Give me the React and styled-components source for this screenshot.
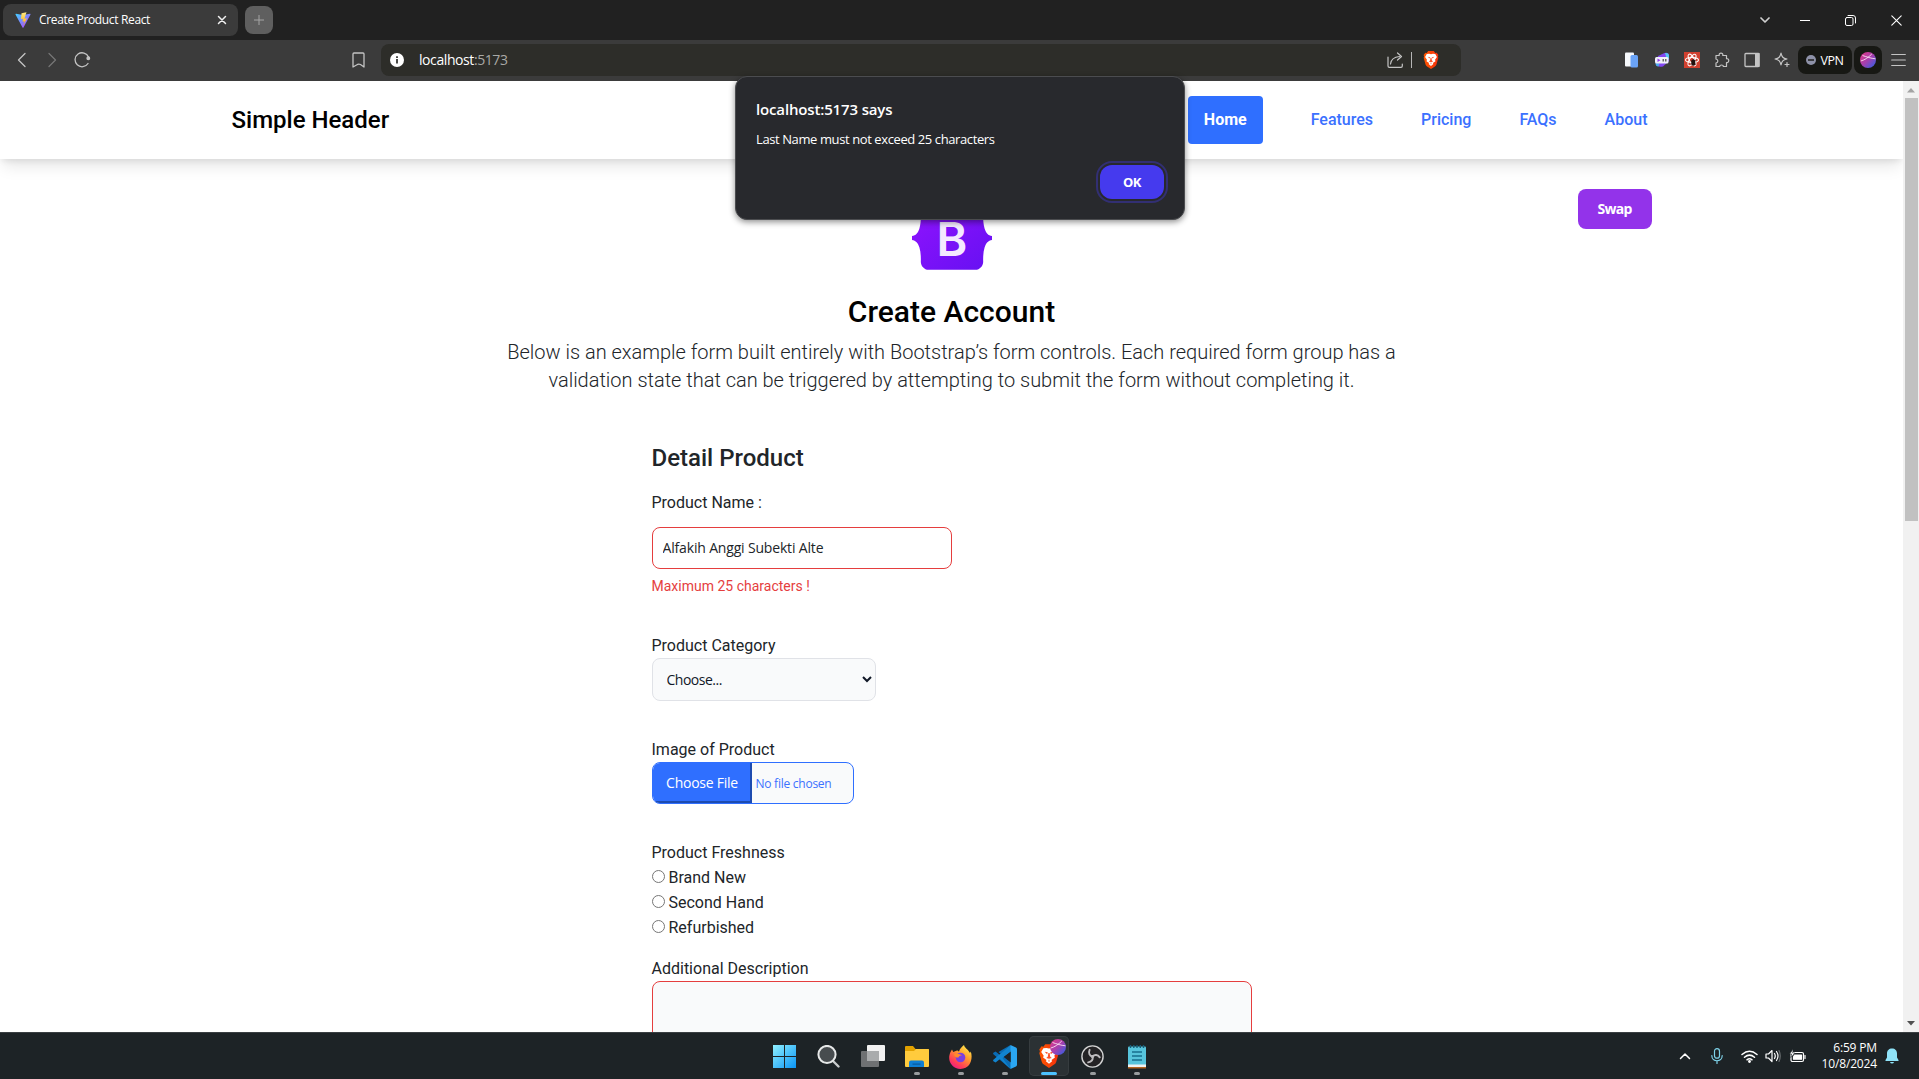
import React from "react";
import styled, { createGlobalStyle } from "styled-components";

const SEGOE = `"Open Sans", "Noto Sans", sans-serif`;
const ROBOTO = `Roboto, "Liberation Sans", sans-serif`;

const GlobalStyle = createGlobalStyle`
  *, *::before, *::after { box-sizing: border-box; }
  body { margin: 0; overflow: hidden; background: #fff; }
  h1, h2, p { margin: 0; }
  svg { display: block; flex: none; }
`;

const Screen = styled.div`
  position: relative;
  display: flex;
  flex-direction: column;
  width: 1919px;
  height: 1079px;
  overflow: hidden;
  font-family: ${SEGOE};
`;

/* ---------- browser chrome ---------- */

const TabStrip = styled.div`
  display: flex;
  align-items: center;
  height: 40px;
  flex: none;
  padding: 0 17px 0 3px;
  background: #212121;
`;

const Tab = styled.div`
  display: flex;
  align-items: center;
  width: 235px;
  height: 32px;
  padding: 0 11px 0 12px;
  border-radius: 8px;
  background: #3b3b3b;
`;

const Txt = styled.span`
  font-family: ${SEGOE};
  font-size: ${(p) => p.$size}px;
  font-weight: ${(p) => p.$weight || 400};
  letter-spacing: ${(p) => p.$ls || 0}px;
  color: ${(p) => p.$color || "#fff"};
  line-height: 1.36;
  white-space: nowrap;
`;

const TabTitle = styled(Txt)`
  flex: 1;
  margin-left: 8px;
`;

const NewTab = styled.div`
  display: flex;
  align-items: center;
  justify-content: center;
  width: 28px;
  height: 28px;
  margin-left: 7px;
  border-radius: 8px;
  background: #5f5f5f;
`;

const WindowControls = styled.div`
  display: flex;
  align-items: center;
  margin-left: auto;
  gap: ${(p) => p.$gap}px;
`;

const MenuChevron = styled.div`
  margin-right: -5px;
`;

const Toolbar = styled.div`
  display: flex;
  align-items: center;
  height: 41px;
  flex: none;
  padding: 0 13px 1px 17px;
  background: #3b3b3b;
`;

const NavIcons = styled.div`
  display: flex;
  align-items: center;
  width: 335px;
  gap: 20px;

  & > :last-child { margin-left: -3px; }
`;

const AddressBar = styled.div`
  display: flex;
  align-items: center;
  width: 1080px;
  height: 32px;
  margin-left: 16px;
  padding: 0 22px 0 9px;
  border-radius: 8px;
  background: #2d2d29;
`;

const Url = styled.div`
  flex: 1;
  margin-left: 15px;
  display: flex;
`;

const Divider = styled.div`
  width: 1px;
  height: 16px;
  margin: 0 11px 0 7px;
  background: #b5b5b5;
`;

const Extensions = styled.div`
  display: flex;
  align-items: center;
  margin-left: auto;
  gap: 14px;
`;

const Pills = styled.div`
  display: flex;
  gap: 2px;
  margin: 0 9px 0 8px;
`;

const Pill = styled.div`
  display: flex;
  align-items: center;
  justify-content: center;
  gap: 4px;
  width: ${(p) => p.$width}px;
  height: 28px;
  border-radius: 8px;
  background: #171814;
`;

/* ---------- web page ---------- */

const Viewport = styled.div`
  display: flex;
  height: 951px;
  flex: none;
  overflow: hidden;
  background: #fff;
`;

const Page = styled.div`
  width: 1903px;
  font-family: ${ROBOTO};
  color: #212529;
`;

const Header = styled.header`
  display: flex;
  align-items: center;
  justify-content: space-between;
  height: 78px;
  padding: 0 239.500px 0 231.500px;
  background: #fff;
  box-shadow: 0 10px 15px -3px rgba(0, 0, 0, 0.1), 0 4px 6px -2px rgba(0, 0, 0, 0.08);
`;

const Brand = styled.div`
  font-size: 24px;
  font-weight: 500;
  color: #000;
`;

const Nav = styled.nav`
  display: flex;
  gap: 16px;
`;

const NavLink = styled.a`
  padding: 12px 16px;
  border-radius: 4px;
  font-size: 16px;
  line-height: 24px;
  font-weight: ${(p) => (p.$active ? 700 : 500)};
  color: ${(p) => (p.$active ? "#fff" : "#3b71ff")};
  background: ${(p) => (p.$active ? "#2f6fff" : "transparent")};
  margin-right: ${(p) => (p.$active ? 16 : 0)}px;
`;

const Hero = styled.section`
  display: flex;
  flex-direction: column;
  align-items: center;
  position: relative;
  padding-top: 47px;
`;

const SwapButton = styled.button`
  position: absolute;
  right: 251px;
  top: 30px;
  width: 74px;
  height: 40px;
  padding: 0 1px 1px 0;
  border: 0;
  border-radius: 8px;
  background: #9333ea;
  color: #fff;
  font: 700 14px ${SEGOE};
  letter-spacing: -0.7px;
`;

const HeroTitle = styled.h1`
  margin-top: 24px;
  font-size: 30px;
  line-height: 36px;
  font-weight: 500;
  color: #000;
`;

const Lead = styled.p`
  width: 930px;
  margin-top: 8px;
  text-align: center;
  font-size: 20px;
  line-height: 28px;
  font-weight: 300;
  letter-spacing: -0.01px;
`;

const Form = styled.form`
  display: flex;
  flex-direction: column;
  align-items: flex-start;
  width: 600px;
  margin: 50px auto 0 651.500px;
`;

const FormTitle = styled.h2`
  font-size: 24px;
  line-height: 29px;
  font-weight: 500;
`;

const Label = styled.label`
  margin-top: ${(p) => p.$top || 0}px;
  font-size: 16px;
  line-height: 24px;
`;

const NameInput = styled.input`
  width: 300px;
  height: 42px;
  margin-top: 12px;
  padding: 0 10px 1px;
  border: 1px solid #e53e3e;
  border-radius: 8px;
  outline: 0;
  font: 400 14px ${SEGOE};
  letter-spacing: -0.17px;
  color: #212529;
  background: #fff;
`;

const ErrorText = styled.div`
  margin-top: 7px;
  font-size: 14px;
  line-height: 20px;
  color: #e53e3e;
`;

const CategorySelect = styled.select`
  width: 224px;
  height: 43px;
  padding: 0 11px 0 10px;
  border: 1px solid #e0e2e7;
  border-radius: 8px;
  background: #f9fafb;
  font: 400 14px ${SEGOE};
  letter-spacing: -0.5px;
  color: #111827;
`;

const FileField = styled.div`
  display: flex;
  width: 202px;
  height: 42px;
  border: 1px solid #2f6fff;
  border-radius: 8px;
  overflow: hidden;
  background: #f9fafb;
`;

const FileButton = styled.div`
  display: flex;
  align-items: center;
  justify-content: center;
  width: 99px;
  padding: 1px 0 0 2px;
  border-right: 2px solid #1d4bb0;
  border-bottom: 2px solid #1d4bb0;
  background: #2f6fff;
`;

const FileName = styled.div`
  display: flex;
  align-items: center;
  padding: 2px 0 0 4px;
`;

const RadioRow = styled.label`
  display: flex;
  align-items: center;
  gap: 4px;
  height: 25px;
  font-size: 16px;
`;

const Radio = styled.input`
  width: 13px;
  height: 13px;
  margin: 0 0 2px;
`;

const Description = styled.textarea`
  width: 600px;
  height: 120px;
  flex: none;
  border: 1px solid #e53e3e;
  border-radius: 8px;
  background: #f9fafb;
  resize: none;
`;

const ScrollTrack = styled.div`
  display: flex;
  flex-direction: column;
  align-items: center;
  width: 16px;
  padding: 7px 0 6px;
  background: #f1f1f1;
`;

const Thumb = styled.div`
  width: 13px;
  height: 423px;
  margin: 5px 0 auto;
  background: #c1c1c1;
`;

/* ---------- alert dialog ---------- */

const Dialog = styled.div`
  position: absolute;
  left: 735px;
  top: 76px;
  display: flex;
  flex-direction: column;
  width: 450px;
  height: 144px;
  padding: 22px 20px 20px;
  border: 1px solid #4b4c4f;
  border-radius: 12px;
  background: #28292d;
  box-shadow: 0 2px 6px rgba(0, 0, 0, 0.45);
`;

const DialogMessage = styled(Txt)`
  margin-top: 12px;
`;

const OkButton = styled.button`
  align-self: flex-end;
  width: 64px;
  height: 34px;
  margin-top: auto;
  padding: 0;
  border: 0;
  border-radius: 12px;
  outline: 2px solid #322f73;
  outline-offset: 2px;
  background: #453aee;
  color: #fff;
  font: 700 13px ${SEGOE};
  letter-spacing: -0.4px;
`;

/* ---------- taskbar ---------- */

const Taskbar = styled.div`
  display: flex;
  align-items: stretch;
  justify-content: space-between;
  height: 47px;
  flex: none;
  padding: 0 20px 0 764.500px;
  border-top: 1px solid #3a3f42;
  background: #1d2326;
`;

const Apps = styled.div`
  display: flex;
  gap: 0;
`;

const AppSlot = styled.div`
  display: flex;
  flex-direction: column;
  align-items: center;
  justify-content: space-between;
  position: relative;
  width: 40px;
  height: 40px;
  margin: 3px 4px 0 0;
  padding: ${(p) => (p.$active ? 8 : 9)}px 0 1px;
  border-radius: 5px;
  border: 0;
  background: ${(p) => (p.$active ? "#2b3134" : "transparent")};
  box-shadow: ${(p) => (p.$active ? "inset 0 0 0 1px #363c3f" : "none")};
`;

const Indicator = styled.div`
  width: ${(p) => (p.$active ? 16 : 6)}px;
  height: 3px;
  border-radius: 2px;
  background: ${(p) => (p.$active ? "#4cc2ff" : "#999c9e")};
`;

const ProfileBadge = styled.div`
  position: absolute;
  right: 3px;
  top: 3px;
`;

const Tray = styled.div`
  display: flex;
  align-items: center;
`;

const Gap = styled.div`
  margin-right: ${(p) => p.$w}px;
`;

const Clock = styled.div`
  display: flex;
  flex-direction: column;
  align-items: flex-end;
  margin-right: 8px;
`;

/* ---------- icons ---------- */

const Line = ({ w = 16, h = 16, sw = 1.4, color = "#c4c4c4", children }) => (
  <svg width={w} height={h} viewBox={`0 0 ${w} ${h}`} fill="none" stroke={color} strokeWidth={sw} strokeLinecap="round" strokeLinejoin="round">
    {children}
  </svg>
);

const ViteIcon = () => (
  <svg width="16" height="16" viewBox="0 0 32 32">
    <defs>
      <linearGradient id="va" x1="0" y1="0" x2="1" y2="1"><stop stopColor="#41d1ff" /><stop offset="1" stopColor="#bd34fe" /></linearGradient>
      <linearGradient id="vb" x1="0" y1="0" x2="0" y2="1"><stop stopColor="#ffea83" /><stop offset="1" stopColor="#ffa800" /></linearGradient>
    </defs>
    <path d="M31 5 17 31q-1 1-2 0L1 5q-.5-1.500 1-1.500l14 2.500 14-2.500q1.500 0 1 1.500z" fill="url(#va)" />
    <path d="M23 .5 13 2.500l-1 12 4-1-1 6 4-1-3 9 8-15-5 1 2-7z" fill="url(#vb)" />
  </svg>
);

const BraveIcon = ({ w = 16, h = 18 }) => (
  <svg width={w} height={h} viewBox="0 0 32 38">
    <defs><linearGradient id="br" x1="0" x2="1"><stop stopColor="#ff5601" /><stop offset="1" stopColor="#f2300d" /></linearGradient></defs>
    <path d="M10 0h12l3 4 3-.5 3.500 5-1 3 1 3-4 14q-1 3-4 4.500L16 38l-7.500-5q-3-1.500-4-4.500L.5 14.500l1-3-1-3L4 3.500 7 4z" fill="url(#br)" />
    <path d="M16 7l4-1 5 .5 3.500 6-4 6 1 3-5.500 4 1 2-5 4-5-4 1-2-5.500-4 1-3-4-6L7 6.500 12 6z" fill="#fff" />
    <path d="M9 12l5 1-1 3zM23 12l-5 1 1 3zM15 14h2l1 6 2.500 2-4.500 1.500L11.500 22l2.500-2zM15.300 25h1.400v3h-1.400z" fill="#fb542b" />
  </svg>
);

const AvatarIcon = ({ size = 16 }) => (
  <svg width={size} height={size} viewBox="0 0 16 16">
    <defs><linearGradient id="av" x1=".1" y1=".1" x2=".9" y2=".9"><stop stopColor="#d83a8c" /><stop offset=".5" stopColor="#a63fae" /><stop offset="1" stopColor="#3f5be0" /></linearGradient></defs>
    <circle cx="8" cy="8" r="8" fill="url(#av)" />
    <path d="M.8 9c4-1 7.500-3.500 11-7M2.500 3.500C6.500 4.800 11 6.500 15.500 6.800" fill="none" stroke="#fbe0f2" strokeWidth=".9" />
  </svg>
);

const BootstrapLogo = () => (
  <svg width="80" height="64" viewBox="0 0 118 94">
    <defs>
      <linearGradient id="bs" x1="0" y1="0" x2="1" y2="1"><stop stopColor="#9013fe" /><stop offset="1" stopColor="#6610f2" /></linearGradient>
    </defs>
    <path fill="url(#bs)" d="M24.509 0c-6.733 0-11.715 5.893-11.492 12.284.214 6.140-.064 14.092-2.066 20.577C8.943 39.365 5.547 43.485 0 44.014v5.972c5.547.529 8.943 4.649 10.951 11.153 2.002 6.485 2.280 14.437 2.066 20.577C12.794 88.106 17.776 94 24.510 94H93.500c6.733 0 11.714-5.893 11.491-12.284-.214-6.140.064-14.092 2.066-20.577 2.009-6.504 5.396-10.624 10.943-11.153v-5.972c-5.547-.529-8.934-4.649-10.943-11.153-2.002-6.484-2.280-14.437-2.066-20.577C105.214 5.894 100.233 0 93.500 0H24.508z" />
    <text x="59" y="73" textAnchor="middle" fontFamily="Inter, Liberation Sans, sans-serif" fontWeight="600" fontSize="69" fill="#f4e9ff">B</text>
  </svg>
);

const WindowsIcon = () => (
  <svg width="23" height="23" viewBox="0 0 23 23">
    <defs><linearGradient id="wi" x1="0" y1="0" x2="23" y2="23" gradientUnits="userSpaceOnUse"><stop stopColor="#8ff0ff" /><stop offset="1" stopColor="#0a94f5" /></linearGradient></defs>
    <path d="M0 0h11v11H0zM12 0h11v11H12zM0 12h11v11H0zM12 12h11v11H12z" fill="url(#wi)" />
  </svg>
);

const SearchIcon = () => (
  <svg width="23" height="23" viewBox="0 0 23 23" fill="none" strokeLinecap="round">
    <path d="M16.500 16.500l5 5" stroke="#c9cccd" strokeWidth="2.400" />
    <circle cx="10" cy="9.500" r="8.600" fill="#474c4f" stroke="#e6e8e8" strokeWidth="2" />
  </svg>
);

const TaskViewIcon = () => (
  <svg width="24" height="23" viewBox="0 0 24 23">
    <rect x="6" y="0" width="18" height="16" rx="1" fill="#f1f1f1" />
    <rect x="0" y="6" width="18" height="16" rx="1" fill="#6f7173" />
    <path d="M6 6h12v10H6z" fill="#a9abac" />
  </svg>
);

const FolderIcon = () => (
  <svg width="24" height="23" viewBox="0 0 24 23">
    <path d="M0 2q0-1 1-1h7l2.500 3H23q1 0 1 1v4H0z" fill="#e2a100" />
    <path d="M0 6h9l2-2h12q1 0 1 1v16q0 1-1 1H1q-1 0-1-1z" fill="#ffcb3d" />
    <path d="M4 22v-4.500Q4 15.500 6 15.500h11q2 0 2 2V22z" fill="#0f7fd4" />
    <path d="M7.500 18.500h8v1.200h-8z" fill="#0a5a9c" />
  </svg>
);

const FirefoxIcon = () => (
  <svg width="23" height="24" viewBox="0 0 23 24">
    <defs>
      <linearGradient id="ff" x1=".85" y1="0" x2=".2" y2="1"><stop stopColor="#fff44f" /><stop offset=".4" stopColor="#ff9a2e" /><stop offset=".75" stopColor="#ff4055" /><stop offset="1" stopColor="#e8178a" /></linearGradient>
    </defs>
    <path d="M15 0c.5 3 4 4 6 8l.8-1.500C24 13 22 24 11.500 24 4 24-1 17 .4 10.500 1 7.500 2 6 3 4.500L4.200 7 8 5.500c1-.5 1.500 1 2 1C11 3 13 2 15 0z" fill="url(#ff)" />
    <circle cx="11.500" cy="12.500" r="4.800" fill="#7a3fe0" />
    <path d="M5 9c3-1.500 6 0 8 1.500-2 0-3 .5-3.500 2C7.500 13 5.500 12 5 9z" fill="#ff8a2a" />
  </svg>
);

const VsCodeIcon = () => (
  <svg width="24" height="24" viewBox="0 0 24 24">
    <path d="M17.500 0 7 10 2.600 6.600.4 7.800q-.6.700 0 1.400L17.500 24l1.500-5-1.500-2L5.500 7z" fill="#0a6cb5" />
    <path d="M17.500 24 7 14l-4.400 3.400-2.200-1.200q-.6-.7 0-1.400L17.500 0l1 3-1 4L9.500 13z" fill="#1184cf" />
    <path d="M17.500 0 23 2.600q1 .5 1 1.600v15.600q0 1.100-1 1.600L17.500 24z" fill="#2aa6f2" />
    <path d="M17.600 6.800v10.400L10.800 12z" fill="#1d2326" />
  </svg>
);

const ObsIcon = () => (
  <svg width="23" height="23" viewBox="0 0 23 23" fill="none">
    <circle cx="11.500" cy="11.500" r="10.600" fill="#242325" stroke="#d2d2d2" strokeWidth="1.400" />
    <g stroke="#bdbbbd" strokeWidth="1.900" strokeLinecap="round">
      {[0, 120, 240].map((angle) => (
        <path key={angle} d="M11.500 11.500C8.500 10.800 7.200 8 8.600 4.800" transform={`rotate(${angle} 11.500 11.500)`} />
      ))}
    </g>
    <circle cx="11.500" cy="11.500" r="1.600" fill="#bdbbbd" />
  </svg>
);

const NotepadIcon = () => (
  <svg width="18" height="24" viewBox="0 0 18 24">
    <rect y="1.500" width="18" height="20" rx="1" fill="#57c4dc" />
    <path d="M2.500 0v3M5.800 0v3M9 0v3M12.300 0v3M15.500 0v3" stroke="#155d78" strokeWidth="1.400" />
    <path d="M4 7h10M4 11h10M4 15h10" stroke="#176d8d" strokeWidth="1.600" />
    <path d="M0 19.500h18V22H0z" fill="#eef2f3" />
    <path d="M0 22h18v1.500H0z" fill="#b5641f" />
  </svg>
);

const apps = [
  { id: "start", icon: <WindowsIcon /> },
  { id: "search", icon: <SearchIcon /> },
  { id: "tasks", icon: <TaskViewIcon /> },
  { id: "files", icon: <FolderIcon />, running: true },
  { id: "firefox", icon: <FirefoxIcon />, running: true },
  { id: "vscode", icon: <VsCodeIcon />, running: true },
  { id: "brave", icon: <BraveIcon w={20} h={24} />, running: true, active: true },
  { id: "obs", icon: <ObsIcon />, running: true },
  { id: "notepad", icon: <NotepadIcon />, running: true },
];

const BrowserChrome = () => (
  <>
    <TabStrip>
      <Tab>
        <ViteIcon />
        <TabTitle $size={12} $ls={-0.35}>Create Product React</TabTitle>
        <Line w={10} h={10} sw={1.500} color="#f0f0f0"><path d="M1.500 1.500l7 7M8.500 1.500l-7 7" /></Line>
      </Tab>
      <NewTab><Line w={10} h={10} sw={1} color="#a5a5a5"><path d="M5 0v10M0 5h10" /></Line></NewTab>
      <WindowControls $gap={35}>
        <MenuChevron><Line w={10} h={10} sw={1.700} color="#cfcfcf"><path d="M1 3l4 4 4-4" /></Line></MenuChevron>
        <Line w={10} h={10} sw={1} color="#fff"><path d="M0 5.500h10" /></Line>
        <Line w={11} h={11} sw={1} color="#fff"><rect x=".5" y="2.500" width="7.500" height="8" rx="1.500" /><path d="M3 .5h5q2.500 0 2.500 2.500v5" /></Line>
        <Line w={11} h={11} sw={1.100} color="#fff"><path d="M.8.8l9.400 9.400M10.200.8L.8 10.200" /></Line>
      </WindowControls>
    </TabStrip>
    <Toolbar>
      <NavIcons>
        <Line w={10} h={16} sw={1.300}><path d="M8 1.500L1.500 8 8 14.500" /></Line>
        <Line w={10} h={16} sw={1.300} color="#757575"><path d="M2 1.500L8.500 8 2 14.500" /></Line>
        <Line w={17} h={16} sw={1.300}><path d="M14.500 5A7 7 0 1 0 14 11.500" /><circle cx="14.300" cy="6.200" r="1.300" fill="#c4c4c4" /></Line>
      </NavIcons>
      <Line w={13} h={16} sw={1.300}><path d="M1 2q0-1 1-1h9q1 0 1 1v13l-3.500-2.500Q6.500 11.500 4.500 13L1 15z" /></Line>
      <AddressBar>
        <svg width="14" height="14" viewBox="0 0 14 14"><circle cx="7" cy="7" r="7" fill="#fff" /><path d="M6 6h2v4.500H6zM6 3.200h2V5H6z" fill="#4a4a48" /></svg>
        <Url>
          <Txt $size={14} $ls={-0.42}>localhost</Txt>
          <Txt $size={14} $ls={-0.42} $color="#a9a9a6">:5173</Txt>
        </Url>
        <Line w={17} h={16} sw={1.200}><path d="M1 5v9q0 1.300 1.300 1.300H14q1.300 0 1.300-1.300v-2M3.500 12c.5-4.500 3.500-7 9-7.500M10.500 1l4 3.500-4 3.500" /></Line>
        <Divider />
        <BraveIcon />
      </AddressBar>
      <Extensions>
        <svg width="15" height="16" viewBox="0 0 15 16"><rect x="0" y=".5" width="9" height="14" rx="1" fill="#f6f8fb" /><rect x="5.500" y="3" width="7.500" height="12.500" rx="1.500" fill="#6aa3f7" /></svg>
        <svg width="16" height="16" viewBox="0 0 16 16"><path d="M4 4l6.500-3q4-1 4.500 2v6l-6 5.500Q4 15.500 2 13z" fill="#8246f2" /><path d="M11 1q4-.5 4 3v3l-3-2.500z" fill="#56c8f0" /><path d="M1.500 11l4 .5-1 3q-3 0-3-3.500z" fill="#4ba8ee" /><rect x="1" y="5" width="13.500" height="6.500" rx="1.500" fill="#f0f1fa" /><path d="M3.500 6.500v3.500l3-1.700z" fill="#9a3cf0" /><path d="M8.500 7h1.500v2.500H8.500zM11 7h1.500v2.500H11z" fill="#666" /></svg>
        <svg width="16" height="16" viewBox="0 0 16 16"><path d="M0 0h16v16H0z" fill="#d0402f" /><g fill="none" stroke="#fff" strokeWidth="1.100"><ellipse cx="8" cy="8" rx="6.500" ry="2.500" /><ellipse cx="8" cy="8" rx="2.500" ry="6.500" transform="rotate(30 8 8)" /><ellipse cx="8" cy="8" rx="2.500" ry="6.500" transform="rotate(-30 8 8)" /></g><ellipse cx="9.300" cy="10.500" rx="2" ry="3.200" fill="#22100e" /><path d="M6.800 8.500l5 4M11.800 8.500l-5 4" stroke="#22100e" strokeWidth=".8" /></svg>
        <Line w={16} h={16} sw={1.200}><path d="M2 3.500h3.200C4.500.2 9.500.2 8.800 3.500h3.700v3.200c3-.6 3 4.400 0 3.800v4H9.300c.5-2-4-2-3.500 0H2V11c2.500-.5 2.500-3.500 0-4z" /></Line>
        <svg width="16" height="16" viewBox="0 0 16 16"><rect x="1" y="1.500" width="14" height="13" rx=".8" fill="none" stroke="#c4c4c4" strokeWidth="1.300" /><path d="M11 1h4.500v14H11z" fill="#c4c4c4" /></svg>
        <Line w={16} h={16} sw={1.200}><path d="M7 1c.8 4 2 5.300 6 6-4 .8-5.200 2-6 6-.8-4-2-5.200-6-6 4-.7 5.200-2 6-6zM13 10.500v4M11 12.500h4" /></Line>
      </Extensions>
      <Pills>
        <Pill $width={54}>
          <svg width="10" height="10" viewBox="0 0 10 10"><circle cx="5" cy="5" r="5" fill="#8e92a8" /><path d="M2 4.300h6v1.400H2z" fill="#171814" /></svg>
          <Txt $size={12.500} $ls={-0.4}>VPN</Txt>
        </Pill>
        <Pill $width={28}><AvatarIcon /></Pill>
      </Pills>
      <Line w={15} h={14} sw={1.200} color="#c4c4c4"><path d="M.7 1.500h13.600M.7 7h13.600M.7 12.500h13.600" /></Line>
    </Toolbar>
  </>
);

const ProductPage = () => (
  <Page>
    <Header>
      <Brand>Simple Header</Brand>
      <Nav>
        <NavLink $active>Home</NavLink>
        <NavLink>Features</NavLink>
        <NavLink>Pricing</NavLink>
        <NavLink>FAQs</NavLink>
        <NavLink>About</NavLink>
      </Nav>
    </Header>
    <Hero>
      <SwapButton>Swap</SwapButton>
      <BootstrapLogo />
      <HeroTitle>Create Account</HeroTitle>
      <Lead>
        Below is an example form built entirely with Bootstrap’s form controls. Each required form group has a
        validation state that can be triggered by attempting to submit the form without completing it.
      </Lead>
    </Hero>
    <Form>
      <FormTitle>Detail Product</FormTitle>
      <Label $top={18}>Product Name :</Label>
      <NameInput defaultValue="Alfakih Anggi Subekti Alte" spellCheck={false} />
      <ErrorText>Maximum 25 characters !</ErrorText>
      <Label $top={38}>Product Category</Label>
      <CategorySelect><option>Choose...</option></CategorySelect>
      <Label $top={37}>Image of Product</Label>
      <FileField>
        <FileButton><Txt $size={14} $ls={-0.25}>Choose File</Txt></FileButton>
        <FileName><Txt $size={12} $ls={-0.25} $color="#3b71ff">No file chosen</Txt></FileName>
      </FileField>
      <Label $top={37}>Product Freshness</Label>
      {["Brand New", "Second Hand", "Refurbished"].map((name) => (
        <RadioRow key={name}><Radio type="radio" name="freshness" />{name}</RadioRow>
      ))}
      <Label $top={17}>Additional Description</Label>
      <Description />
    </Form>
  </Page>
);

export default function App() {
  return (
    <Screen>
      <GlobalStyle />
      <BrowserChrome />
      <Viewport>
        <ProductPage />
        <ScrollTrack>
          <svg width="8" height="5" viewBox="0 0 8 5"><path d="M4 0l4 4.500H0z" fill="#a3a3a3" /></svg>
          <Thumb />
          <svg width="8" height="5" viewBox="0 0 8 5"><path d="M4 4.500L0 0h8z" fill="#505050" /></svg>
        </ScrollTrack>
      </Viewport>
      <Dialog>
        <Txt $size={15} $weight={600} $ls={-0.15}>localhost:5173 says</Txt>
        <DialogMessage $size={13} $ls={-0.4}>Last Name must not exceed 25 characters</DialogMessage>
        <OkButton>OK</OkButton>
      </Dialog>
      <Taskbar>
        <Apps>
          {apps.map((a) => (
            <AppSlot key={a.id} $active={a.active}>
              {a.icon}
              {a.active && <ProfileBadge><AvatarIcon /></ProfileBadge>}
              {a.running && <Indicator $active={a.active} />}
            </AppSlot>
          ))}
        </Apps>
        <Tray>
          <Line w={12} h={8} sw={1.500} color="#fff"><path d="M1.500 6.500L6 2l4.500 4.500" /></Line>
          <Gap $w={20} />
          <Line w={12} h={16} sw={1.200} color="#7fd3ea"><rect x="3.500" y=".7" width="5" height="9.500" rx="2.500" /><path d="M.8 7.500c0 7 10.400 7 10.400 0M6 13v2.500" /></Line>
          <Gap $w={18} />
          <Line w={17} h={13} sw={1.500} color="#fff"><path d="M1 4.500Q8.500-2 16 4.500M3.500 7.200q5-4.200 10 0M6 9.800q2.500-2 5 0" /><circle cx="8.500" cy="11.500" r=".7" fill="#fff" /></Line>
          <Gap $w={7} />
          <Line w={16} h={14} sw={1.200} color="#fff"><path d="M1 5v4h2.500L7 12.500v-11L3.500 5zM9.500 4.500q1.500 2.500 0 5M11.500 2.500q3 4.500 0 9" /><path d="M14 1.500q2.500 5.500 0 11" stroke="#666b6e" /></Line>
          <Gap $w={8} />
          <Line w={17} h={14} sw={1.200} color="#fff"><rect x="2" y="3.500" width="12.500" height="9" rx="1.500" /><path d="M5.500 6h7v4.200H4.500V8z" fill="#fff" /><path d="M16 6.500v3" /><path d="M4 .3L.6 5h2L1.800 8.500 6 4H4z" fill="#fff" stroke="#1d2326" strokeWidth=".6" /></Line>
          <Gap $w={16} />
          <Clock>
            <Txt $size={12} $ls={-0.15}>6:59 PM</Txt>
            <Txt $size={12} $ls={-0.15}>10/8/2024</Txt>
          </Clock>
          <svg width="14" height="16" viewBox="0 0 14 16"><path d="M7 .5c-3 0-5 2-5 5v4L.5 12v1h13v-1L12 9.500v-4c0-3-2-5-5-5zM5 14h4q-.5 1.500-2 1.500T5 14z" fill="#8fe3f8" /></svg>
        </Tray>
      </Taskbar>
    </Screen>
  );
}
